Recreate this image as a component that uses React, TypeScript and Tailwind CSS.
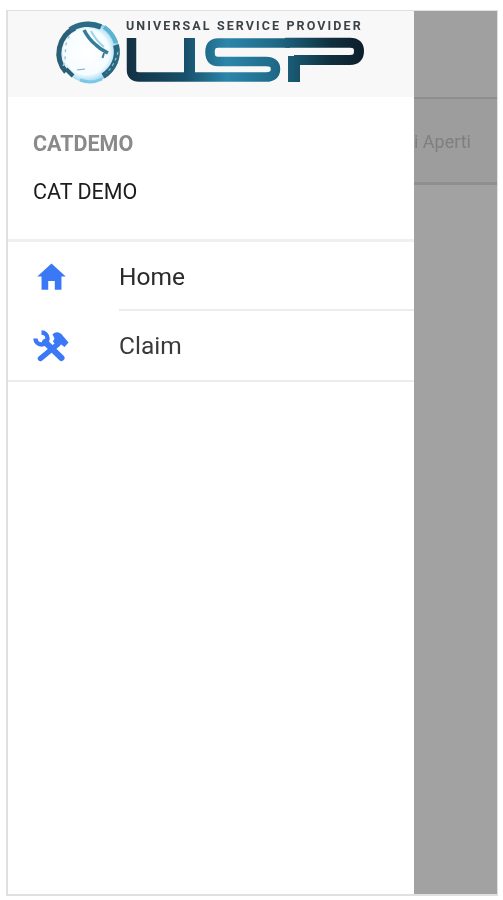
import { IoMdHome } from "react-icons/io";

function ToolsIcon() {
  return (
    <svg width="36" height="32" viewBox="0 0 36 32" className="blur-[0.3px]" fill="none" stroke="#3b78f5">
      <path d="M8.5 2.5 A6 6 0 1 1 2.5 8.5" strokeWidth="4.5" />
      <path d="M12 12 L28.5 28" strokeWidth="6" strokeLinecap="round" />
      <path d="M25 14 L7.5 28.5" strokeWidth="5.5" strokeLinecap="round" />
      <path d="M19.5 4.5 C23 1 27 2 30 6 L35.5 12.5 L31.5 17 L27.5 14 L24.5 17 L20 11.5 L21.5 8.5 Z" fill="#3b78f5" stroke="none" />
    </svg>
  );
}

function Logo() {
  return (
    <svg width="320" height="78" viewBox="50 10 320 78" className="blur-[0.7px]">
      <defs>
        <linearGradient id="usp" gradientUnits="userSpaceOnUse" x1="125" y1="0" x2="367" y2="0">
          <stop offset="0" stopColor="#123041" />
          <stop offset="0.25" stopColor="#17506a" />
          <stop offset="0.42" stopColor="#2b86aa" />
          <stop offset="0.62" stopColor="#1f6a88" />
          <stop offset="0.85" stopColor="#10303f" />
          <stop offset="1" stopColor="#0c1c28" />
        </linearGradient>
        <radialGradient id="globe" cx="0.46" cy="0.5" r="0.56">
          <stop offset="0" stopColor="#ffffff" />
          <stop offset="0.66" stopColor="#f6fcff" />
          <stop offset="0.86" stopColor="#a5dcf2" />
          <stop offset="1" stopColor="#58aed0" />
        </radialGradient>
      </defs>
      <circle cx="89" cy="52" r="30.5" fill="url(#globe)" />
      <g fill="none">
        <path d="M66 72 A28 28 0 0 1 75 28" stroke="#2b5f75" strokeWidth="5" />
        <path d="M63 66 C68 56 62 44 71 34" stroke="#9fc6d6" strokeWidth="1.5" strokeDasharray="3 4" />
        <path d="M70 30 C78 24 90 22 101 27" stroke="#2c6a86" strokeWidth="5.5" />
        <path d="M116 45 A28 28 0 0 1 103 76" stroke="#2a6680" strokeWidth="6" />
        <path d="M118 52 C116 60 112 68 106 73" stroke="#8cc4da" strokeWidth="1.2" strokeDasharray="3 3" />
        <path d="M104 27 C110 31 114 37 116 43" stroke="#5cb2d2" strokeWidth="4.5" />
        <path d="M80 80 C88 83 96 82 102 79" stroke="#7cc8e4" strokeWidth="3" />
        <path d="M84 30 C87 36 91 41 96 45 C101 50 104 51 108 53" stroke="#357c9a" strokeWidth="3.5" />
        <path d="M91 31 C94 37 98 42 104 47" stroke="#9cd6ea" strokeWidth="2" />
        <path d="M104 53 L102.5 58" stroke="#357c9a" strokeWidth="2" />
        <path d="M77 70 L85 69" stroke="#7fa9ba" strokeWidth="1" />
        <path d="M66 69 L73 76" stroke="#2b5f75" strokeWidth="4" />
      </g>
      <g fill="none" stroke="url(#usp)">
        <path d="M131.5 38 V70 Q131.5 77 139 77 H266 Q275.5 77 275.5 69 Q275.5 61.5 266 61.5 H218 Q210 61.5 210 52 Q210 43 218 43 H290" strokeWidth="9.5" />
        <path d="M285 42.7 H350 Q359 42.7 359 51 Q359 60 350 60 H294" strokeWidth="10" />
        <path d="M189.5 38 V77" strokeWidth="11" />
        <path d="M294 56 V82" strokeWidth="12" />
      </g>
    </svg>
  );
}

export default function App() {
  return (
    <div className="h-[900px] w-[503px] bg-white pl-[6px] pt-[10px] font-['Roboto',sans-serif]">
      <div className="flex h-[886px] w-[492px] overflow-hidden border border-b-2 border-l-2 border-[#e0e0e0]">
        <div className="flex w-[406px] shrink-0 flex-col bg-white">
          <div className="relative h-[86px] bg-[#f8f8f8]">
            <div className="absolute left-[42px] top-[-1px]">
              <Logo />
            </div>
            <div className="absolute left-[118px] top-[7px] whitespace-nowrap text-[12.5px] font-bold leading-[16px] tracking-[2.1px] text-[#3c4347] blur-[0.5px]">
              UNIVERSAL SERVICE PROVIDER
            </div>
          </div>
          <div className="h-[145px] border-b-[3px] border-[#f0f0f0] pl-[25px] pt-[35px]">
            <div className="text-[21.5px] font-bold leading-[24px] text-[#8a8a8a] blur-[0.3px]">CATDEMO</div>
            <div className="mt-[24px] text-[21.5px] leading-[24px] text-[#1c1c1c] blur-[0.3px]">CAT DEMO</div>
          </div>
          <div className="flex h-[69px] items-center">
            <div className="flex w-[111px] shrink-0 pl-[26px]">
              <IoMdHome className="h-[35px] w-[35px] text-[#3b78f5] blur-[0.3px]" />
            </div>
            <div className="flex h-full flex-1 items-center border-b-2 border-[#ececec] pt-[4px] text-[24.5px] text-[#2a2a2a] blur-[0.3px]">
              Home
            </div>
          </div>
          <div className="flex h-[71px] items-center border-b-2 border-[#ececec]">
            <div className="flex w-[111px] shrink-0 pl-[25px]">
              <ToolsIcon />
            </div>
            <div className="pt-[2px] text-[24.5px] text-[#3a3a3a] blur-[0.3px]">Claim</div>
          </div>
        </div>
        <div className="flex flex-1 flex-col overflow-hidden bg-[#a1a1a1]">
          <div className="h-[88px] border-b-2 border-[#8e8e8e] bg-[#a0a0a0]" />
          <div className="flex h-[86px] items-center justify-end whitespace-nowrap border-b-[3px] border-[#8f8f8f] bg-[#9d9d9d] pr-[26px] pt-[1px] text-[18px] text-[#7f7f7f] blur-[0.4px]">
            i Aperti
          </div>
          <div className="flex-1 bg-[#a2a2a2]" />
        </div>
      </div>
    </div>
  );
}
